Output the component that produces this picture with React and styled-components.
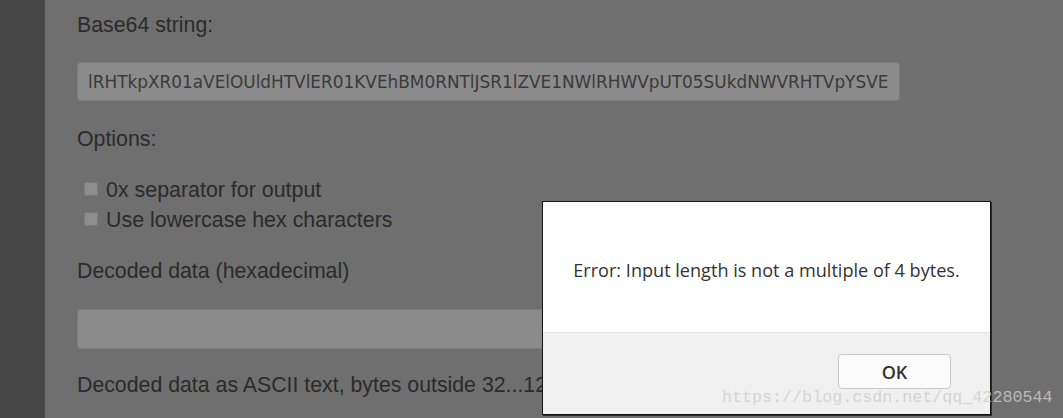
import React from "react";
import styled, { createGlobalStyle } from "styled-components";

const Global = createGlobalStyle`
  html, body { margin: 0; padding: 0; }
  body {
    width: 1063px;
    height: 418px;
    overflow: hidden;
    background: #6f6f6f;
    font-family: "Liberation Sans", Arial, sans-serif;
  }
`;

const Page = styled.div`
  position: relative;
  display: flex;
  width: 1063px;
  height: 418px;
  overflow: hidden;
`;

const Sidebar = styled.div`
  width: 45px;
  flex: none;
  background: #474747;
`;

const Main = styled.main`
  flex: 1;
  display: flex;
  flex-direction: column;
  padding: 13px 0 0 32px;
  background: #6f6f6f;
  color: #2b2b2b;
`;

const Label = styled.div`
  font-size: 21.3px;
  line-height: 24px;
  margin-top: ${(p) => p.$gap || 0}px;
`;

const TextBox = styled.div`
  box-sizing: border-box;
  width: 823px;
  height: ${(p) => p.$h}px;
  margin-top: ${(p) => p.$gap}px;
  background: #8b8b8b;
  border: 1px solid #7c7c7c;
  border-radius: 4px;
  padding: 0 10px;
  display: flex;
  align-items: center;
  font-family: "DejaVu Sans", sans-serif;
  font-size: 16.9px;
  color: #3a3a3a;
  white-space: nowrap;
  overflow: hidden;
`;

const Options = styled.div`
  display: flex;
  flex-direction: column;
  margin-top: 24px;
  padding-left: 7px;
`;

const CheckRow = styled.label`
  display: flex;
  align-items: center;
  gap: 8px;
  height: 30px;
  font-size: 21.4px;
`;

const Box = styled.span`
  box-sizing: border-box;
  width: 14px;
  height: 14px;
  margin-top: -3px;
  background: #8d8d8d;
  border: 1px solid #7a7a7a;
  border-radius: 2px;
`;

const Dialog = styled.div`
  position: absolute;
  left: 542px;
  top: 201px;
  box-sizing: border-box;
  width: 449px;
  height: 214px;
  display: flex;
  flex-direction: column;
  background: #ffffff;
  border: 1px solid #141414;
  box-shadow: 1px 1px 0 #2a2a2a;
`;

const DialogBody = styled.div`
  height: 130px;
  display: flex;
  align-items: center;
  justify-content: center;
  padding-top: 6px;
  box-sizing: border-box;
  font-family: "Open Sans", "Noto Sans", sans-serif;
  font-size: 18.1px;
  color: #333;
`;

const DialogFooter = styled.div`
  flex: 1;
  background: #f0f0f0;
  border-top: 1px solid #e4e4e4;
  display: flex;
  justify-content: flex-end;
  align-items: flex-start;
  padding: 21px 39px 0 0;
`;

const OkButton = styled.button`
  box-sizing: border-box;
  width: 113px;
  height: 35px;
  background: #fbfbfb;
  border: 1px solid #cacaca;
  border-radius: 4px;
  font-family: "Open Sans", "Noto Sans", sans-serif;
  font-size: 18px;
  font-weight: 600;
  color: #333;
  padding: 0;
`;

const Watermark = styled.div`
  position: absolute;
  left: 722px;
  top: 386px;
  font-family: "Liberation Mono", "DejaVu Sans Mono", monospace;
  font-size: 16.7px;
  line-height: 24px;
  color: rgba(205, 205, 205, 0.8);
  white-space: nowrap;
  pointer-events: none;
`;

export default function App() {
  return (
    <>
      <Global />
      <Page>
        <Sidebar />
        <Main>
          <Label>Base64 string:</Label>
          <TextBox $h={39} $gap={25}>
            lRHTkpXR01aVElOUldHTVlER01KVEhBM0RNTlJSR1lZVE1NWlRHWVpUT05SUkdNWVRHTVpYSVE
          </TextBox>
          <Label $gap={26}>Options:</Label>
          <Options>
            <CheckRow>
              <Box />
              0x separator for output
            </CheckRow>
            <CheckRow>
              <Box />
              Use lowercase hex characters
            </CheckRow>
          </Options>
          <Label $gap={24}>Decoded data (hexadecimal)</Label>
          <TextBox $h={40} $gap={26} />
          <Label $gap={24}>Decoded data as ASCII text, bytes outside 32...126 are shown as dots</Label>
        </Main>
        <Dialog>
          <DialogBody>Error: Input length is not a multiple of 4 bytes.</DialogBody>
          <DialogFooter>
            <OkButton>OK</OkButton>
          </DialogFooter>
        </Dialog>
        <Watermark>https://blog.csdn.net/qq_42280544</Watermark>
      </Page>
    </>
  );
}
